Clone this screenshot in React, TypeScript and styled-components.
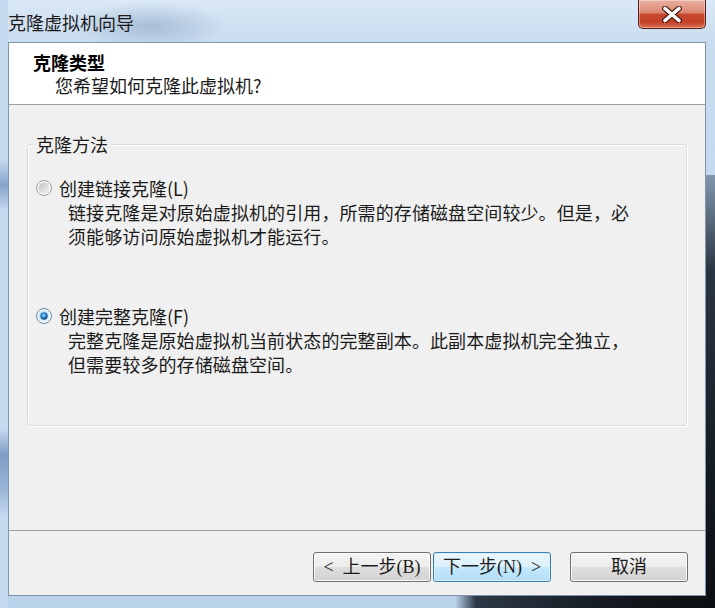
import React, { useId } from 'react';
import styled, { createGlobalStyle } from 'styled-components';

const GlobalStyle = createGlobalStyle`
  html, body { margin: 0; padding: 0; }
  body {
    width: 715px;
    height: 608px;
    overflow: hidden;
    font-family: "Noto Sans CJK SC", "Noto Sans", sans-serif;
  }
`;

const Window = styled.div`
  box-sizing: border-box;
  width: 715px;
  height: 608px;
  padding: 0 9px 12px 8px;
  display: flex;
  flex-direction: column;
  background:
    radial-gradient(ellipse 80px 24px at 150px 26px, rgba(84, 116, 156, 0.32), rgba(84, 116, 156, 0) 100%),
    linear-gradient(180deg, #8297ad 0%, #2a3643 22%, #141a21 70%, #0c0f13 100%) right 0 top 175px / 9px calc(100% - 175px) no-repeat,
    linear-gradient(90deg, rgba(60, 76, 94, 0) 0%, #2c3846 8%, #141a20 60%, #0c0f13 100%) right 0 bottom 0 / 260px 12px no-repeat,
    linear-gradient(180deg, #c4d8ee 0px, #c4d8ee 160px, #86a5cc 185px, #c4d8ee 210px, #c4d8ee 430px, #7d9dc5 455px, #9bb6d8 490px, #c4d8ee 515px) left 0 top 0 / 8px 100% no-repeat,
    linear-gradient(180deg, #dae8f6 0%, #c9dcf0 45px, #bcd3ec 100%);
`;

const TitleBar = styled.div`
  height: 42px;
  flex: none;
  display: flex;
  justify-content: space-between;
  align-items: flex-start;
`;

const Title = styled.div`
  margin-top: 11px;
  font-size: 18px;
  line-height: 22px;
  color: #1b1b1b;
`;

const CloseButton = styled.div`
  box-sizing: border-box;
  width: 68px;
  height: 29px;
  border: 1px solid #5b1d16;
  border-top: none;
  border-radius: 0 0 5px 5px;
  background: linear-gradient(180deg, #eab0a2 0%, #dc8a74 44%, #c64a30 52%, #c43f27 78%, #dc7152 100%);
  box-shadow: inset 0 0 0 1px rgba(255, 255, 255, 0.35);
  display: flex;
  align-items: center;
  justify-content: center;
`;

const Client = styled.div`
  flex: 1;
  display: flex;
  flex-direction: column;
  background: #f0f0f0;
  border: 1px solid #8193a8;
  color: #1b1b1b;
`;

const Header = styled.div`
  box-sizing: border-box;
  height: 62px;
  flex: none;
  padding: 8px 0 0 24px;
  background: #ffffff;
  border-bottom: 1px solid #a0a0a0;
  font-size: 18px;
  line-height: 23px;
`;

const HeaderTitle = styled.div`
  font-weight: 700;
  color: #000;
`;

const HeaderSubtitle = styled.div`
  padding-left: 22px;
  color: #1b1b1b;
`;

const Body = styled.div`
  flex: 1;
  padding: 28px 18px 0 18px;
`;

const GroupBox = styled.fieldset`
  margin: 0;
  padding: 21px 8px 49px 8px;
  border: 1px solid #d8dde2;
  border-radius: 3px;
  box-shadow: 1px 1px 0 #ffffff, inset 1px 1px 0 #ffffff;
`;

const Legend = styled.legend`
  margin-left: -3px;
  padding: 0 3px;
  font-size: 18px;
  line-height: 22px;
  color: #1b1b1b;
  background: #f0f0f0;
`;

const Option = styled.div`
  display: flex;
  flex-direction: column;
  & + & {
    margin-top: 56px;
  }
`;

const RadioRow = styled.label`
  display: flex;
  align-items: center;
  gap: 7px;
  height: 24px;
  font-size: 18px;
  line-height: 24px;
  color: #1b1b1b;
`;

const Description = styled.p`
  margin: 0 0 0 32px;
  font-size: 18px;
  line-height: 24px;
  letter-spacing: 0.1px;
  color: #1b1b1b;
`;

const Footer = styled.div`
  box-sizing: border-box;
  height: 65px;
  flex: none;
  border-top: 1px solid #a0a0a0;
  padding: 21px 17px 0 0;
  display: flex;
  justify-content: flex-end;
  align-items: flex-start;
`;

const ButtonGroup = styled.div`
  display: flex;
  gap: 2px;
  margin-right: 19px;
`;

const Button = styled.button<{ $primary?: boolean }>`
  box-sizing: border-box;
  width: 118px;
  height: 30px;
  padding: 0;
  border-radius: 3px;
  font-family: "Liberation Serif", "Noto Sans CJK SC", serif;
  font-size: 18px;
  line-height: 28px;
  color: #1b1b1b;
  border: 1px solid ${(p) => (p.$primary ? '#3c7fb1' : '#707070')};
  background: ${(p) =>
    p.$primary
      ? 'linear-gradient(180deg, #eaf6fd 0%, #dcf1fc 49%, #c4e8fc 50%, #b2def6 100%)'
      : 'linear-gradient(180deg, #f4f4f4 0%, #ececec 49%, #dedede 50%, #d3d3d3 100%)'};
  box-shadow: inset 0 0 0 1px ${(p) => (p.$primary ? '#d8f0fd' : '#fbfbfb')};
  white-space: pre;
`;

function Radio({ checked }: { checked?: boolean }) {
  const id = useId().replace(/:/g, '');
  if (checked) {
    return (
      <svg width="16" height="16" viewBox="0 0 16 16">
        <defs>
          <linearGradient id={`ring${id}`} x1="0" y1="0" x2="1" y2="1">
            <stop offset="0" stopColor="#bfe0f6" />
            <stop offset="1" stopColor="#e8f5fd" />
          </linearGradient>
          <radialGradient id={`dot${id}`} cx="0.45" cy="0.4" r="0.6">
            <stop offset="0" stopColor="#9fe2ff" />
            <stop offset="0.45" stopColor="#2f8ed6" />
            <stop offset="1" stopColor="#0b3f78" />
          </radialGradient>
        </defs>
        <circle cx="8" cy="8" r="7.5" fill="#f2f7fb" stroke="#6d8aa4" />
        <circle cx="8" cy="8" r="5.6" fill={`url(#ring${id})`} />
        <circle cx="8" cy="8" r="3.7" fill={`url(#dot${id})`} />
      </svg>
    );
  }
  return (
    <svg width="16" height="16" viewBox="0 0 16 16">
      <defs>
        <linearGradient id={`u${id}`} x1="0" y1="0" x2="1" y2="1">
          <stop offset="0" stopColor="#c2c2c2" />
          <stop offset="1" stopColor="#f4f4f4" />
        </linearGradient>
      </defs>
      <circle cx="8" cy="8" r="7.5" fill="#f6f6f6" stroke="#a0a0a0" />
      <circle cx="8" cy="8" r="5.4" fill={`url(#u${id})`} />
    </svg>
  );
}

export default function App() {
  return (
    <>
      <GlobalStyle />
      <Window>
        <TitleBar>
          <Title>克隆虚拟机向导</Title>
          <CloseButton>
            <svg width="22" height="17" viewBox="0 0 22 17">
              <path d="M4 2.5 L18 14.5 M18 2.5 L4 14.5" stroke="#4a1a12" strokeWidth="5.8" strokeLinecap="round" />
              <path d="M4 2.5 L18 14.5 M18 2.5 L4 14.5" stroke="#ffffff" strokeWidth="3.6" strokeLinecap="round" />
            </svg>
          </CloseButton>
        </TitleBar>
        <Client>
          <Header>
            <HeaderTitle>克隆类型</HeaderTitle>
            <HeaderSubtitle>您希望如何克隆此虚拟机?</HeaderSubtitle>
          </Header>
          <Body>
            <GroupBox>
              <Legend>克隆方法</Legend>
              <Option>
                <RadioRow>
                  <Radio />
                  创建链接克隆(L)
                </RadioRow>
                <Description>
                  链接克隆是对原始虚拟机的引用，所需的存储磁盘空间较少。但是，必
                  <br />
                  须能够访问原始虚拟机才能运行。
                </Description>
              </Option>
              <Option>
                <RadioRow>
                  <Radio checked />
                  创建完整克隆(F)
                </RadioRow>
                <Description>
                  完整克隆是原始虚拟机当前状态的完整副本。此副本虚拟机完全独立，
                  <br />
                  但需要较多的存储磁盘空间。
                </Description>
              </Option>
            </GroupBox>
          </Body>
          <Footer>
            <ButtonGroup>
              <Button>{'<  上一步(B)'}</Button>
              <Button $primary>{'下一步(N)  >'}</Button>
            </ButtonGroup>
            <Button>取消</Button>
          </Footer>
        </Client>
      </Window>
    </>
  );
}
